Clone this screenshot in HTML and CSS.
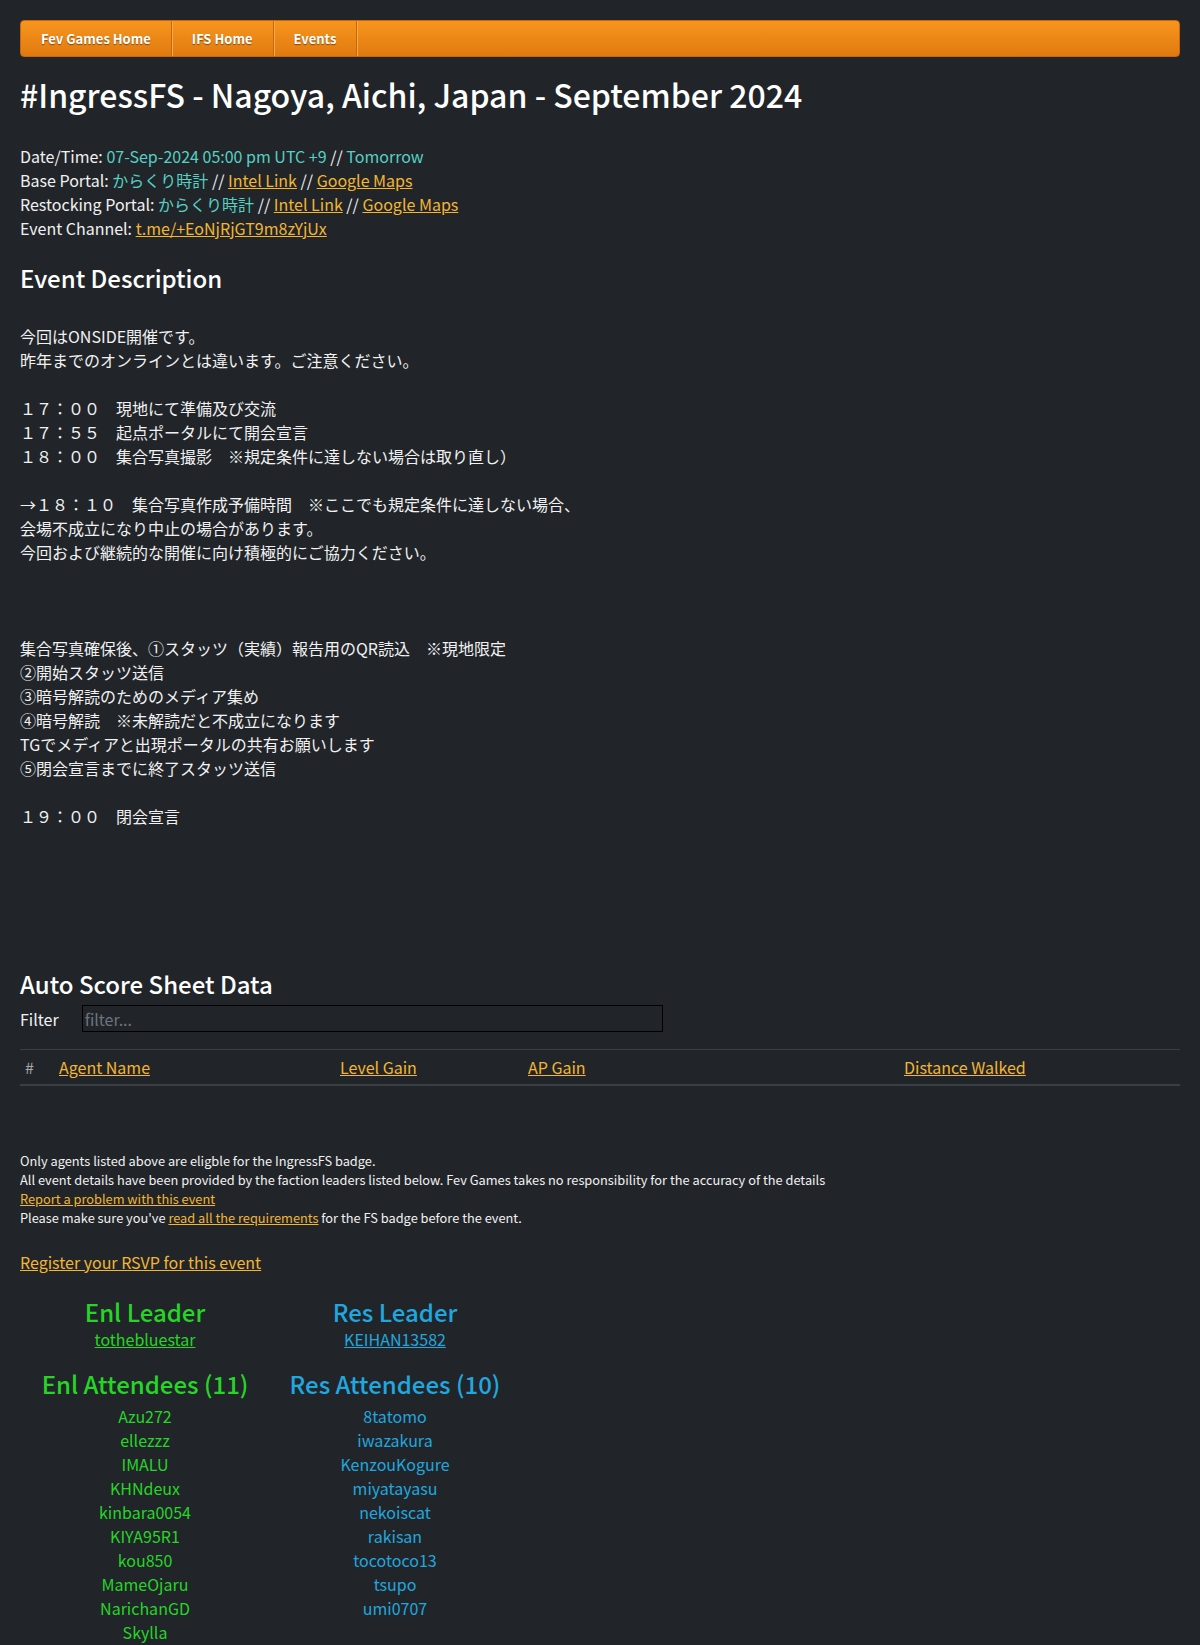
FILE: index.html
```html
<!DOCTYPE html>
<html lang="en">
<head>
    <meta charset="UTF-8">
    <meta name="viewport" content="width=device-width, initial-scale=1.0">
    <title>#IngressFS - Nagoya, Aichi, Japan - September 2024</title>
    <link rel="stylesheet" href="styles.css">
</head>
<body>
    <!-- Top menu -->
    <nav class="menu">
        <a href="#" class="menu-item">Fev Games Home</a>
        <a href="#" class="menu-item">IFS Home</a>
        <a href="#" class="menu-item">Events</a>
    </nav>

    <h1 class="page-title">#IngressFS - Nagoya, Aichi, Japan - September 2024</h1>

    <!-- Event info -->
    <div class="event-info">
        <div>Date/Time: <span class="hl">07-Sep-2024 05:00 pm UTC +9</span> // <span class="hl">Tomorrow</span></div>
        <div>Base Portal: <span class="hl">からくり時計</span> // <a href="#">Intel Link</a> // <a href="#">Google Maps</a></div>
        <div>Restocking Portal: <span class="hl">からくり時計</span> // <a href="#">Intel Link</a> // <a href="#">Google Maps</a></div>
        <div>Event Channel: <a href="#">t.me/+EoNjRjGT9m8zYjUx</a></div>
    </div>

    <h2 class="section-title">Event Description</h2>
    <div class="description">今回はONSIDE開催です。
昨年までのオンラインとは違います。ご注意ください。

１７：００　現地にて準備及び交流
１７：５５　起点ポータルにて開会宣言
１８：００　集合写真撮影　※規定条件に達しない場合は取り直し）

→１８：１０　集合写真作成予備時間　※ここでも規定条件に達しない場合、
会場不成立になり中止の場合があります。
今回および継続的な開催に向け積極的にご協力ください。



集合写真確保後、①スタッツ（実績）報告用のQR読込　※現地限定
②開始スタッツ送信
③暗号解読のためのメディア集め
④暗号解読　※未解読だと不成立になります
TGでメディアと出現ポータルの共有お願いします
⑤閉会宣言までに終了スタッツ送信

１９：００　閉会宣言</div>

    <!-- Score sheet -->
    <h2 class="section-title score-title">Auto Score Sheet Data</h2>
    <div class="filter-row">
        <label for="filter">Filter</label>
        <input type="text" id="filter" placeholder="filter...">
    </div>

    <table class="score-table">
        <thead>
            <tr>
                <th class="col-num">#</th>
                <th class="col-agent"><a href="#">Agent Name</a></th>
                <th class="col-level"><a href="#">Level Gain</a></th>
                <th class="col-ap"><a href="#">AP Gain</a></th>
                <th><a href="#">Distance Walked</a></th>
            </tr>
        </thead>
        <tbody></tbody>
    </table>

    <div class="notes">
        <div>Only agents listed above are eligble for the IngressFS badge.</div>
        <div>All event details have been provided by the faction leaders listed below. Fev Games takes no responsibility for the accuracy of the details</div>
        <div><a href="#">Report a problem with this event</a></div>
        <div>Please make sure you've <a href="#">read all the requirements</a> for the FS badge before the event.</div>
    </div>

    <a href="#" class="rsvp">Register your RSVP for this event</a>

    <!-- Teams -->
    <div class="teams">
        <div class="team enl">
            <h3>Enl Leader</h3>
            <a href="#">tothebluestar</a>
            <h3 class="attendees">Enl Attendees (11)</h3>
            <ul>
                <li>Azu272</li>
                <li>ellezzz</li>
                <li>IMALU</li>
                <li>KHNdeux</li>
                <li>kinbara0054</li>
                <li>KIYA95R1</li>
                <li>kou850</li>
                <li>MameOjaru</li>
                <li>NarichanGD</li>
                <li>Skylla</li>
            </ul>
        </div>
        <div class="team res">
            <h3>Res Leader</h3>
            <a href="#">KEIHAN13582</a>
            <h3 class="attendees">Res Attendees (10)</h3>
            <ul>
                <li>8tatomo</li>
                <li>iwazakura</li>
                <li>KenzouKogure</li>
                <li>miyatayasu</li>
                <li>nekoiscat</li>
                <li>rakisan</li>
                <li>tocotoco13</li>
                <li>tsupo</li>
                <li>umi0707</li>
            </ul>
        </div>
    </div>
</body>
</html>
```

FILE: styles.css
```css
body {
    font-family: "Noto Sans CJK JP", "Noto Sans", sans-serif;
    font-size: 16px;
    line-height: 24px;
    margin: 0;
    padding: 20px;
    background: #212529;
    color: #f1f1f1;
}

a {
    color: #f2b632;
}

/* Menu */
.menu {
    display: flex;
    height: 35px;
    background: linear-gradient(#f8951d, #e07a10);
    border: 1px solid #c8680b;
    border-radius: 4px;
}

.menu-item {
    display: flex;
    align-items: center;
    padding: 1px 20px 0;
    color: #fff;
    font-size: 13px;
    font-weight: bold;
    text-decoration: none;
    text-shadow: 0 1px 1px rgba(0, 0, 0, 0.45);
    border-right: 1px solid #c8680b;
    box-shadow: 1px 0 0 #fbab4e;
}

/* Headings */
.page-title {
    font-size: 32px;
    font-weight: 500;
    line-height: 38px;
    margin: 18px 0 31px;
    color: #fff;
}

.section-title {
    font-size: 24px;
    font-weight: 500;
    line-height: 30px;
    margin: 23px 0 31px;
    color: #fff;
}

.hl {
    color: #56d0c3;
}

.description {
    white-space: pre-wrap;
}

/* Score sheet */
.score-title {
    margin: 141px 0 6px;
}

.filter-row {
    display: flex;
    align-items: center;
    gap: 23px;
}

.filter-row input {
    width: 575px;
    height: 25px;
    padding: 0 2px;
    border: 1px solid #000;
    background: #212529;
    color: #fff;
    font: inherit;
}

.filter-row input::placeholder {
    color: #6c757d;
}

.score-table {
    width: 100%;
    border-collapse: collapse;
    margin-top: 17px;
}

.score-table th {
    text-align: left;
    font-weight: normal;
    padding: 5px;
    border-top: 1px solid #3a3f44;
    border-bottom: 2px solid #3a3f44;
    color: #aaa;
}

.col-num { width: 24px; }
.col-agent { width: 271px; }
.col-level { width: 178px; }
.col-ap { width: 366px; }

/* Notes */
.notes {
    margin-top: 65px;
    font-size: 12.8px;
    line-height: 19px;
}

.rsvp {
    display: inline-block;
    margin-top: 23px;
}

/* Teams */
.teams {
    display: grid;
    grid-template-columns: 250px 250px;
    margin-top: 23px;
    text-align: center;
}

.team h3 {
    font-size: 24px;
    font-weight: 500;
    line-height: 30px;
    margin: 0;
}

.team h3.attendees {
    margin-top: 18px;
}

.team ul {
    list-style: none;
    margin: 5px 0 0;
    padding: 0;
}

.enl, .enl a {
    color: #26d526;
}

.res, .res a {
    color: #21a7df;
}
```
